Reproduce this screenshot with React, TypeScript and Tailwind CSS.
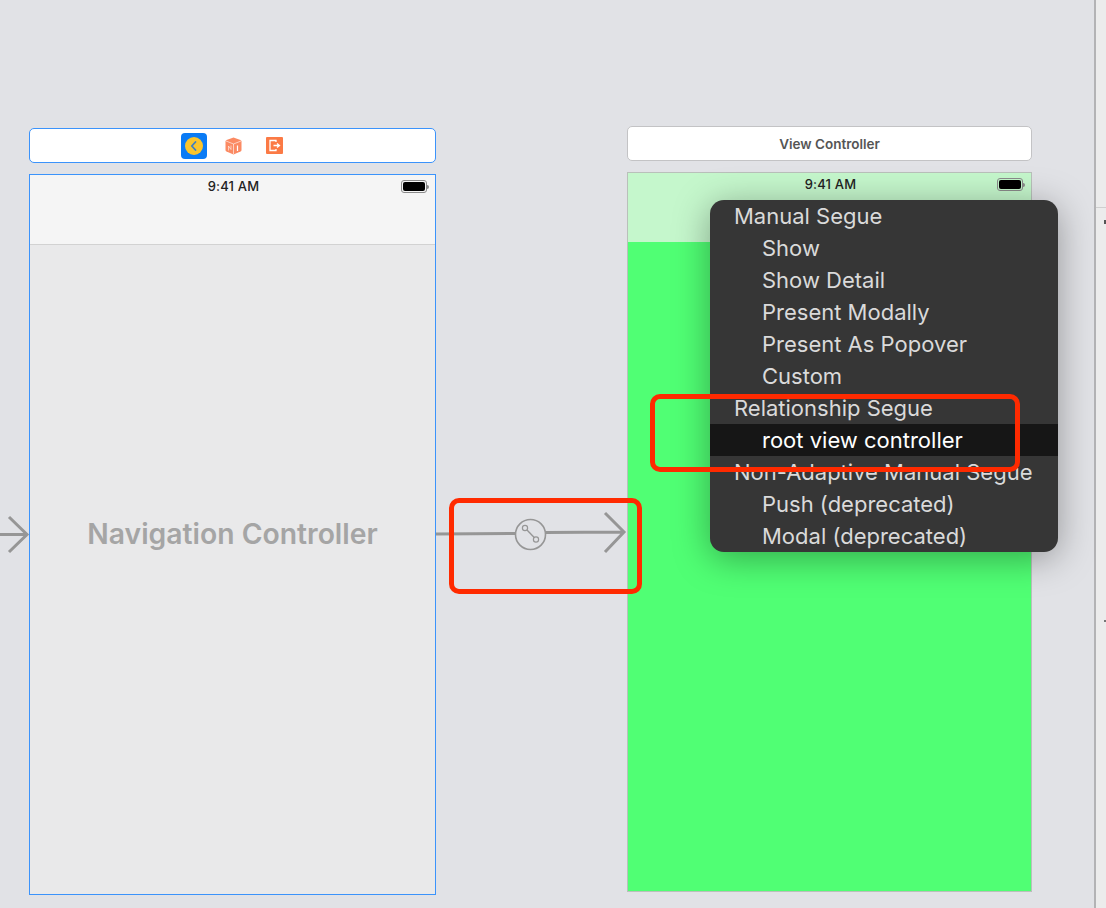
const font = "font-['Inter','Liberation_Sans',sans-serif]";

const menuRows = [
  { label: "Manual Segue", indent: false },
  { label: "Show", indent: true },
  { label: "Show Detail", indent: true },
  { label: "Present Modally", indent: true },
  { label: "Present As Popover", indent: true },
  { label: "Custom", indent: true },
  { label: "Relationship Segue", indent: false },
  { label: "root view controller", indent: true, active: true },
  { label: "Non-Adaptive Manual Segue", indent: false },
  { label: "Push (deprecated)", indent: true },
  { label: "Modal (deprecated)", indent: true },
];

function Battery() {
  return (
    <div className="flex items-center">
      <div className="w-[26px] h-[13px] rounded-[3px] border border-[#8a8a8a] p-px">
        <div className="w-full h-full rounded-[2px] bg-black" />
      </div>
      <div className="w-[2px] h-[4px] bg-[#8a8a8a] rounded-r-sm" />
    </div>
  );
}

function StatusBar() {
  return (
    <div className="relative h-[22px] pt-[3px] flex justify-center">
      <span className="text-[13px] leading-[16px] font-medium tracking-[0.2px] text-[#222] translate-x-[1px]">9:41 AM</span>
      <div className="absolute right-[6px] top-[5px]">
        <Battery />
      </div>
    </div>
  );
}

function SceneIcons() {
  return (
    <div className="h-full flex items-center justify-center pr-[2px]">
      <div className="w-[26px] h-[26px] rounded-[4px] bg-[#0a7bf5] flex items-center justify-center">
        <svg width="20" height="20" viewBox="0 0 20 20">
          <circle cx="10" cy="10" r="9" fill="#fbc52c" />
          <path d="M11.5 6 L7.8 10 L11.5 14" fill="none" stroke="#3f7fc4" strokeWidth="1.8" strokeLinecap="round" strokeLinejoin="round" />
        </svg>
      </div>
      <svg className="ml-[18px]" width="17" height="18" viewBox="0 0 17 18">
        <path d="M8.5 0.5 L15.5 3 Q16.5 3.5 16.5 4.5 V13 Q16.5 14 15.5 14.5 L8.5 17.5 L1.5 14.5 Q0.5 14 0.5 13 V4.5 Q0.5 3.5 1.5 3 Z" fill="#fb8a63" />
        <path d="M1 4 L8.5 7 L16 4 M8.5 7 V17" fill="none" stroke="#fff" strokeWidth="0.8" opacity="0.75" />
        <path d="M12.5 8.5 V14" stroke="#fff" strokeWidth="1.2" />
        <path d="M3.5 13.5 V9 L6 12.5 V8.5" fill="none" stroke="#fff" strokeWidth="0.7" opacity="0.8" />
      </svg>
      <svg className="ml-[24px]" width="17" height="17" viewBox="0 0 17 17">
        <rect width="17" height="17" rx="1" fill="#fb7a45" />
        <path d="M10 5 V3.5 H4 V13.5 H10 V12" fill="none" stroke="#fff" strokeWidth="1.3" />
        <path d="M7.5 8.5 H13 M11 6.5 L13.5 8.5 L11 10.5" fill="none" stroke="#fff" strokeWidth="1.3" />
      </svg>
    </div>
  );
}

export default function App() {
  return (
    <div className={`flex w-[1106px] h-[908px] overflow-hidden bg-[#e1e2e6] ${font}`}>
      {/* Storyboard canvas */}
      <div className="relative w-[1094px] h-full">
        {/* Navigation controller scene */}
        <div className="absolute left-[29px] top-[128px] w-[407px] h-[35px] bg-white border border-[#3b93fb] rounded-[5px]">
          <SceneIcons />
        </div>
        <div className="absolute left-[29px] top-[174px] w-[407px] h-[721px] border border-[#3b93fb] bg-[#e9e9ea] flex flex-col">
          <div className="h-[70px] bg-[#f5f5f5] border-b border-[#d2d2d2]">
            <StatusBar />
          </div>
          <div className="flex-1 flex items-center justify-center pb-[70px]">
            <span className="text-[28.3px] font-semibold text-[#a5a5a5]">Navigation Controller</span>
          </div>
        </div>

        {/* View controller scene */}
        <div className="absolute left-[627px] top-[126px] w-[405px] h-[35px] bg-white border border-[#c3c3c5] rounded-[5px] flex items-center justify-center pt-px">
          <span className="text-[13.5px] font-semibold text-[#555]">View Controller</span>
        </div>
        <div className="absolute left-[627px] top-[172px] w-[405px] h-[720px] border border-[#b9c0ba] bg-[#50ff74] flex flex-col">
          <div className="h-[69px] bg-[#c5f7cc]">
            <StatusBar />
          </div>
        </div>

        {/* Segue arrows */}
        <svg className="absolute left-0 top-[500px]" width="640" height="70" viewBox="0 0 640 70" fill="none" stroke="#969696">
          <path d="M0 34.5 H27 M9 17 L27 34.5 L9 52" strokeWidth="3" />
          <path d="M436 34 L515 33.5 M546 32.5 L623 32 M605 13 L624 32 L605 52" strokeWidth="3" />
          <circle cx="530.5" cy="34.5" r="15" strokeWidth="1.6" />
          <circle cx="525" cy="28" r="2.6" strokeWidth="1.2" />
          <circle cx="536" cy="39.5" r="2.6" strokeWidth="1.2" />
          <path d="M527 30 L534.2 37.6" strokeWidth="1.4" />
        </svg>

        {/* Segue popup menu */}
        <div className="absolute left-[710px] top-[200px] w-[348px] rounded-[14px] bg-[#363636] overflow-hidden shadow-[0_6px_36px_rgba(0,0,0,0.35)]">
          {menuRows.map((row) => (
            <div
              key={row.label}
              className={`h-[32px] flex items-center text-[22px] whitespace-nowrap pt-px ${row.indent ? "pl-[52px]" : "pl-[24px]"} ${
                row.active ? "bg-[#161616] text-white" : "text-[#dadada]"
              }`}
            >
              {row.label}
            </div>
          ))}
        </div>

        {/* Red annotations */}
        <div className="absolute left-[650px] top-[394px] w-[370px] h-[78px] border-[5px] border-[#ff2a00] rounded-[10px]" />
        <div className="absolute left-[449px] top-[498px] w-[193px] h-[96px] border-[5px] border-[#ff2a00] rounded-[10px]" />
      </div>

      {/* Inspector edge */}
      <div className="w-[2px] h-full bg-[#b3b3b5]" />
      <div className="relative flex-1 bg-[#ececec]">
        <div className="h-[208px] border-b border-[#cfcfcf]" />
        <div className="absolute right-0 top-[220px] w-[2px] h-[4px] bg-[#555]" />
        <div className="absolute right-0 top-[620px] w-[2px] h-[2px] bg-[#777]" />
      </div>
    </div>
  );
}
